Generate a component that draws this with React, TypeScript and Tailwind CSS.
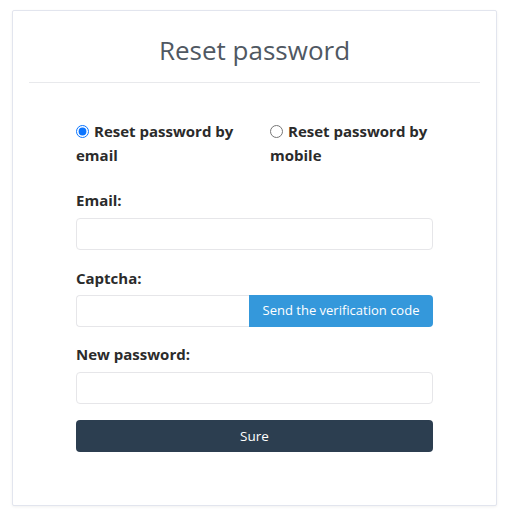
import { useState } from "react";

const font = { fontFamily: '"Open Sans", "Noto Sans", sans-serif' };

function Field({ label, className = "" }: { label: string; className?: string }) {
  return (
    <div className={className}>
      <label className="block text-[15px] font-bold leading-[24px] text-[#2b2b2b]">{label}</label>
      <input className="mt-[6px] block h-[32px] w-full rounded-[4px] border border-[#e6e6e9] px-2 text-sm outline-none" />
    </div>
  );
}

export default function App() {
  const [mode, setMode] = useState<"email" | "mobile">("email");

  return (
    <div className="min-h-[518px] bg-white pl-[12px] pt-[10px]" style={font}>
      <div className="h-[496px] w-[485px] rounded-[2px] border border-[#e2e5ee] bg-white px-[16px] shadow-[0_1px_3px_rgba(0,0,0,0.06)]">
        <h1 className="pt-[19px] text-center text-[26px] font-normal leading-[40px] text-[#505862]">
          Reset password
        </h1>
        <div className="mt-[12px] border-t border-[#e8e9ec]" />

        <form className="mx-auto mt-[36px] w-[357px]" onSubmit={(e) => e.preventDefault()}>
          <div className="grid grid-cols-[194px_1fr] text-[15px] font-bold leading-[24px] text-[#2b2b2b]">
            <label className="cursor-pointer">
              <input
                type="radio"
                name="mode"
                checked={mode === "email"}
                onChange={() => setMode("email")}
                className="mr-[5px] h-[13px] w-[13px] align-[-1px] accent-[#0a74ff]"
              />
              Reset password by email
            </label>
            <label className="cursor-pointer">
              <input
                type="radio"
                name="mode"
                checked={mode === "mobile"}
                onChange={() => setMode("mobile")}
                className="mr-[5px] h-[13px] w-[13px] align-[-1px] accent-[#0a74ff]"
              />
              Reset password by mobile
            </label>
          </div>

          <Field label="Email:" className="mt-[21px]" />

          <div className="mt-[16px]">
            <label className="block text-[15px] font-bold leading-[24px] text-[#2b2b2b]">Captcha:</label>
            <div className="mt-[5px] flex h-[32px]">
              <input className="h-full min-w-0 flex-1 rounded-l-[4px] border border-r-0 border-[#e6e6e9] px-2 text-sm outline-none" />
              <button
                type="button"
                className="h-full w-[184px] rounded-r-[4px] bg-[#3498db] text-[13px] text-white"
              >
                Send the verification code
              </button>
            </div>
          </div>

          <Field label="New password:" className="mt-[15px]" />

          <button
            type="submit"
            className="mt-[16px] h-[32px] w-full rounded-[4px] bg-[#2c3e50] text-[13.5px] leading-[30px] text-white"
          >
            Sure
          </button>
        </form>
      </div>
    </div>
  );
}
